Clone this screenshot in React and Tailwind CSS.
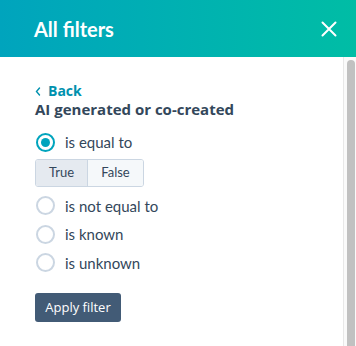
import React from "react";

function Radio({ checked, label }) {
  return (
    <label className="flex items-center gap-[10px] h-[28.5px]">
      <span
        className={
          "w-[19px] h-[19px] rounded-full border-2 flex items-center justify-center bg-white " +
          (checked ? "border-[#00a4bd]" : "border-[#cbd6e2]")
        }
      >
        {checked && <span className="w-[9px] h-[9px] rounded-full bg-[#00a4bd]" />}
      </span>
      <span className="text-[15px] text-[#33475b]">{label}</span>
    </label>
  );
}

export default function App() {
  return (
    <div
      className="w-[356px] h-[346px] overflow-hidden bg-white flex flex-col"
      style={{ fontFamily: '"Lato", "Open Sans", sans-serif' }}
    >
      <div className="h-[57px] shrink-0 bg-gradient-to-r from-[#00a4bd] to-[#00bda5] flex items-center justify-between pl-[34px] pr-[19px]">
        <span className="text-white font-bold text-[20px]" style={{ fontFamily: '"Lato", sans-serif' }}>All filters</span>
        <svg width="16" height="16" viewBox="0 0 16 16" fill="none" stroke="white" strokeWidth="2" strokeLinecap="round">
          <path d="M1.5 1.5 L14.5 14.5 M14.5 1.5 L1.5 14.5" />
        </svg>
      </div>
      <div className="flex flex-1 min-h-0">
        <div className="flex-1 pl-[35px] pt-[25px]">
          <div className="flex items-center gap-[7px] text-[#0091ae] font-bold text-[14px] leading-[18px]" style={{ fontFamily: '"Open Sans", sans-serif' }}>
            <svg width="6" height="9" viewBox="0 0 6 9" fill="none" stroke="#0091ae" strokeWidth="1.4" strokeLinecap="round">
              <path d="M4.5 1 L1.5 4.5 L4.5 8" />
            </svg>
            <span>Back</span>
          </div>
          <div className="-mt-[1px] text-[#33475b] font-bold text-[15px] leading-[20px]" style={{ fontFamily: '"Open Sans", sans-serif' }}>
            AI generated or co-created
          </div>
          <div className="mt-[9px] pl-[1px]">
            <Radio checked label="is equal to" />
          </div>
          <div className="mt-[2px] flex w-[109px] h-[28px] border border-[#cbd6e2] rounded-[3px] overflow-hidden text-[13px] text-[#33475b]">
            <div className="w-[52px] bg-[#e5eaf0] border-r border-[#cbd6e2] flex items-center justify-center">True</div>
            <div className="flex-1 bg-[#f5f8fa] flex items-center justify-center">False</div>
          </div>
          <div className="mt-[5px] flex flex-col pl-[1px]">
            <Radio label="is not equal to" />
            <Radio label="is known" />
            <Radio label="is unknown" />
          </div>
          <button className="mt-[16px] h-[29px] w-[86px] bg-[#425b76] text-white text-[13px] rounded-[3px] flex items-center justify-center" style={{ fontFamily: '"Open Sans", sans-serif' }}>
            Apply filter
          </button>
        </div>
        <div className="w-[13px] shrink-0 border-l border-[#e8e8e8] bg-[#fafafa] pt-[3px] pl-[3px] pr-[2px]">
          <div className="h-[400px] w-[8px] rounded-full bg-[#c1c1c1]" />
        </div>
      </div>
    </div>
  );
}
